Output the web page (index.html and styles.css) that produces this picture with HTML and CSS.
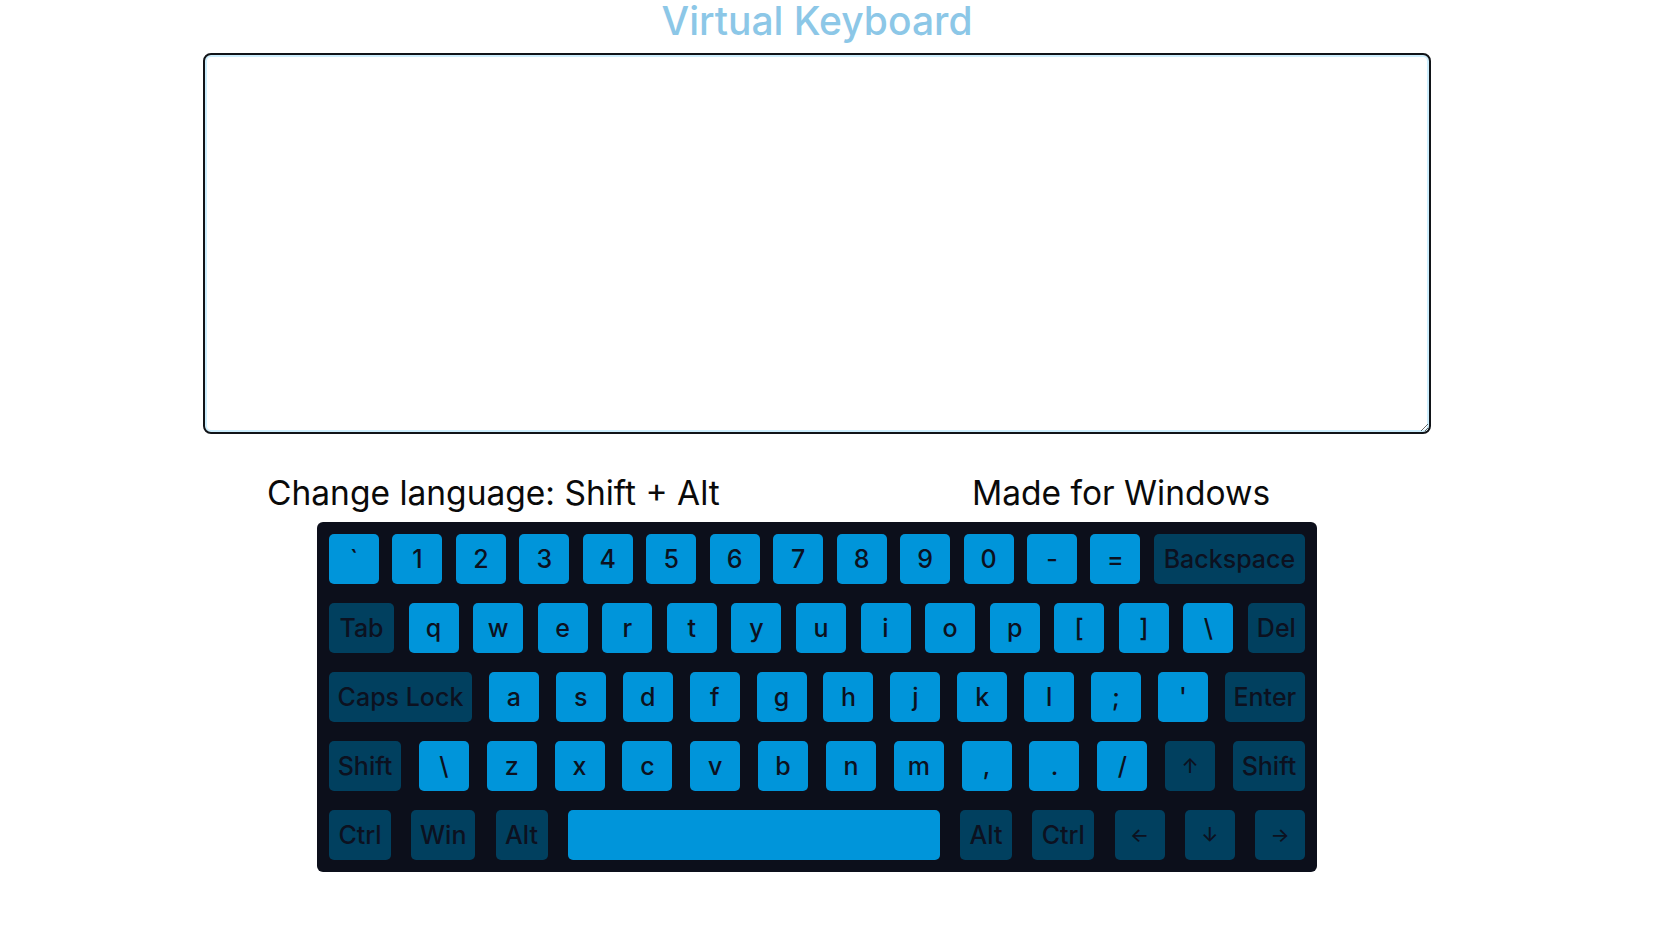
FILE: index.html
```html
<!DOCTYPE html>
<html lang="en">
<head>
<meta charset="utf-8">
<title>Virtual Keyboard</title>
<link rel="stylesheet" href="styles.css">
</head>
<body>
<div class="page">
  <h1 class="title">Virtual Keyboard</h1>
  <textarea class="editor"></textarea>
  <div class="info">
    <div class="info-item">Change language: Shift + Alt</div>
    <div class="info-item">Made for Windows</div>
  </div>
  <div class="keyboard">
    <div class="row">
      <div class="key">`</div><div class="key">1</div><div class="key">2</div><div class="key">3</div><div class="key">4</div><div class="key">5</div><div class="key">6</div><div class="key">7</div><div class="key">8</div><div class="key">9</div><div class="key">0</div><div class="key">-</div><div class="key">=</div><div class="key special backspace">Backspace</div>
    </div>
    <div class="row">
      <div class="key special tab">Tab</div><div class="key">q</div><div class="key">w</div><div class="key">e</div><div class="key">r</div><div class="key">t</div><div class="key">y</div><div class="key">u</div><div class="key">i</div><div class="key">o</div><div class="key">p</div><div class="key">[</div><div class="key">]</div><div class="key">\</div><div class="key special del">Del</div>
    </div>
    <div class="row">
      <div class="key special caps">Caps Lock</div><div class="key">a</div><div class="key">s</div><div class="key">d</div><div class="key">f</div><div class="key">g</div><div class="key">h</div><div class="key">j</div><div class="key">k</div><div class="key">l</div><div class="key">;</div><div class="key">'</div><div class="key special enter">Enter</div>
    </div>
    <div class="row">
      <div class="key special shift">Shift</div><div class="key">\</div><div class="key">z</div><div class="key">x</div><div class="key">c</div><div class="key">v</div><div class="key">b</div><div class="key">n</div><div class="key">m</div><div class="key">,</div><div class="key">.</div><div class="key">/</div><div class="key special arrow">↑</div><div class="key special shift">Shift</div>
    </div>
    <div class="row">
      <div class="key special ctrl">Ctrl</div><div class="key special win">Win</div><div class="key special alt">Alt</div><div class="key space"></div><div class="key special alt">Alt</div><div class="key special ctrl">Ctrl</div><div class="key special arrow">←</div><div class="key special arrow">↓</div><div class="key special arrow">→</div>
    </div>
  </div>
</div>
</body>
</html>
```
FILE: styles.css
```css
html, body {
  margin: 0;
  padding: 0;
  background: #ffffff;
}

body {
  font-family: Inter, "Noto Sans", "DejaVu Sans", sans-serif;
  color: #0b0b0b;
}

.page {
  width: 1634px;
  display: flex;
  flex-direction: column;
  align-items: center;
}

.title {
  margin: 0;
  height: 53px;
  font-size: 39px;
  line-height: 42px;
  font-weight: 500;
  color: #8cc7e7;
  letter-spacing: 0;
}

.editor {
  display: block;
  box-sizing: border-box;
  width: 1228px;
  height: 381px;
  margin: 0;
  border: 2px solid #111418;
  border-radius: 8px;
  box-shadow: inset 0 0 0 2px #cdeefd;
  background: #ffffff;
  outline: none;
  padding: 4px;
  font-family: inherit;
  font-size: 16px;
}

.info {
  width: 1100px;
  height: 88px;
  display: grid;
  grid-template-columns: 705px 1fr;
  align-items: start;
  padding-top: 40px;
  box-sizing: border-box;
}

.info-item {
  font-size: 33.5px;
  line-height: 38px;
  font-weight: 400;
  color: #0a0a0a;
}

.keyboard {
  box-sizing: border-box;
  width: 1000px;
  height: 350px;
  padding: 12px;
  background: #0c0f1b;
  border-radius: 6px;
  display: flex;
  flex-direction: column;
  gap: 19px;
}

.row {
  display: flex;
  justify-content: space-between;
  height: 50px;
}

.key {
  box-sizing: border-box;
  width: 50px;
  height: 50px;
  border-radius: 5px;
  background: #0095da;
  color: #0c1120;
  font-size: 25px;
  font-weight: 500;
  display: flex;
  align-items: center;
  justify-content: center;
  white-space: nowrap;
}

.special {
  background: #01405f;
}

.backspace { width: 151px; }
.tab { width: 65px; }
.del { width: 57px; }
.caps { width: 143px; }
.enter { width: 80px; }
.shift { width: 72px; }
.ctrl { width: 62px; }
.win { width: 64px; }
.alt { width: 52px; }
.space { width: 372px; }
.arrow { font-size: 20px; }
```
